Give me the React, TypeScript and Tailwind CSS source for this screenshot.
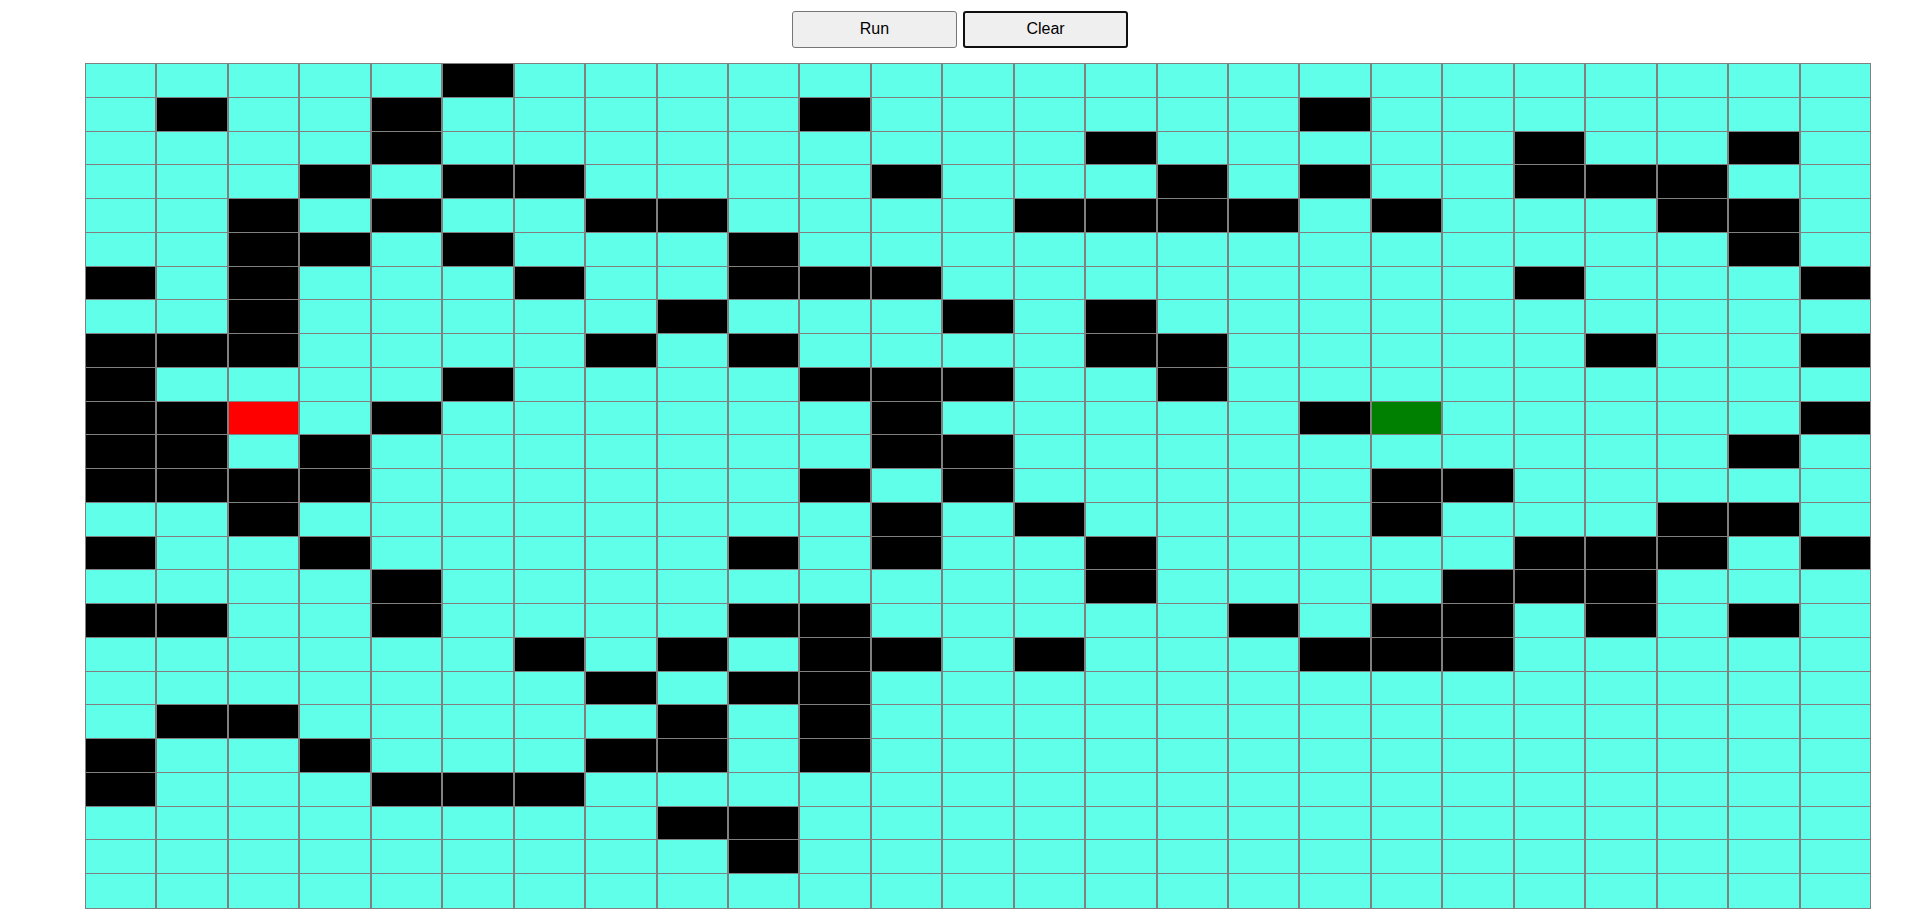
import React, { useState } from "react";
import clsx from "clsx";

type CellKind = "open" | "wall" | "start" | "end";

const COLUMNS = 25;
const START = { row: 10, col: 2 };
const END = { row: 10, col: 18 };

// Columns occupied by a wall, one list per row.
const INITIAL_WALLS: number[][] = [
  [5],
  [1, 4, 10, 17],
  [4, 14, 20, 23],
  [3, 5, 6, 11, 15, 17, 20, 21, 22],
  [2, 4, 7, 8, 13, 14, 15, 16, 18, 22, 23],
  [2, 3, 5, 9, 23],
  [0, 2, 6, 9, 10, 11, 20, 24],
  [2, 8, 12, 14],
  [0, 1, 2, 7, 9, 14, 15, 21, 24],
  [0, 5, 10, 11, 12, 15],
  [0, 1, 4, 11, 17, 24],
  [0, 1, 3, 11, 12, 23],
  [0, 1, 2, 3, 10, 12, 18, 19],
  [2, 11, 13, 18, 22, 23],
  [0, 3, 9, 11, 14, 20, 21, 22, 24],
  [4, 14, 19, 20, 21],
  [0, 1, 4, 9, 10, 16, 18, 19, 21, 23],
  [6, 8, 10, 11, 13, 17, 18, 19],
  [7, 9, 10],
  [1, 2, 8, 10],
  [0, 3, 7, 8, 10],
  [0, 4, 5, 6],
  [8, 9],
  [9],
  [],
];

const FILL: Record<CellKind, string> = {
  open: "bg-[#60ffe9]",
  wall: "bg-black",
  start: "bg-[#ff0000]",
  end: "bg-[#008000]",
};

function kindOf(walls: number[][], row: number, col: number): CellKind {
  if (row === START.row && col === START.col) return "start";
  if (row === END.row && col === END.col) return "end";
  return walls[row].includes(col) ? "wall" : "open";
}

function ToolButton({
  active = false,
  onClick,
  children,
}: {
  active?: boolean;
  onClick?: () => void;
  children: React.ReactNode;
}) {
  return (
    <button
      type="button"
      onClick={onClick}
      className={clsx(
        "flex h-[37px] w-[165px] items-center justify-center rounded-[3px] bg-[#efefef] pb-[2px] text-base text-black",
        active ? "border-2 border-[#101010]" : "border border-[#767676]",
      )}
    >
      {children}
    </button>
  );
}

export default function App() {
  const [walls, setWalls] = useState(INITIAL_WALLS);

  return (
    <main className="flex min-h-screen flex-col bg-white pt-[11px] pr-[49px] pb-[14px] pl-[85px] font-['Liberation_Sans',Arial,sans-serif]">
      <div className="-ml-[36px] flex justify-center gap-[6px] pb-[15px]">
        <ToolButton>Run</ToolButton>
        <ToolButton active onClick={() => setWalls(walls.map(() => []))}>
          Clear
        </ToolButton>
      </div>
      <div className="grid flex-1 grid-cols-[repeat(25,minmax(0,1fr))] grid-rows-[repeat(24,minmax(0,1fr))_36px]">
        {walls.map((_, row) =>
          Array.from({ length: COLUMNS }, (_, col) => (
            <div
              key={`${row}-${col}`}
              className={clsx(
                "border-x border-t border-[#808080]",
                row === walls.length - 1 && "border-b",
                FILL[kindOf(walls, row, col)],
              )}
            />
          )),
        )}
      </div>
    </main>
  );
}
